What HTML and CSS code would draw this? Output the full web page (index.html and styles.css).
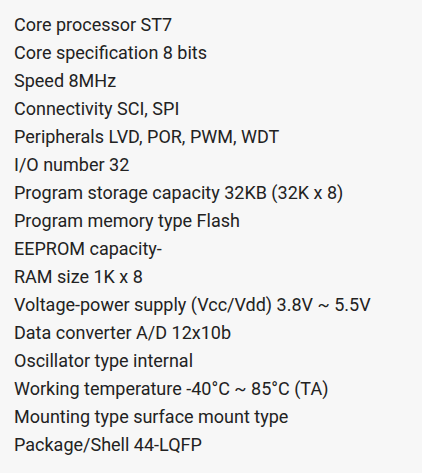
FILE: index.html
```html
<!DOCTYPE html>
<html lang="en">
<head>
<meta charset="utf-8">
<link rel="stylesheet" href="styles.css">
</head>
<body>
<ul class="specs">
<li>Core processor ST7</li>
<li>Core specification 8 bits</li>
<li>Speed 8MHz</li>
<li>Connectivity SCI, SPI</li>
<li>Peripherals LVD, POR, PWM, WDT</li>
<li>I/O number 32</li>
<li>Program storage capacity 32KB (32K x 8)</li>
<li>Program memory type Flash</li>
<li>EEPROM capacity-</li>
<li>RAM size 1K x 8</li>
<li>Voltage-power supply (Vcc/Vdd) 3.8V ~ 5.5V</li>
<li>Data converter A/D 12x10b</li>
<li>Oscillator type internal</li>
<li>Working temperature -40°C ~ 85°C (TA)</li>
<li>Mounting type surface mount type</li>
<li>Package/Shell 44-LQFP</li>
</ul>
</body>
</html>
```
FILE: styles.css
```css
html, body {
  margin: 0;
  background: #f7f7f7;
}
body {
  font-family: Roboto, "Liberation Sans", sans-serif;
  color: #222;
}
.specs {
  list-style: none;
  margin: 0;
  padding: 11px 14px;
}
.specs li {
  font-size: 18px;
  line-height: 28px;
}
```
